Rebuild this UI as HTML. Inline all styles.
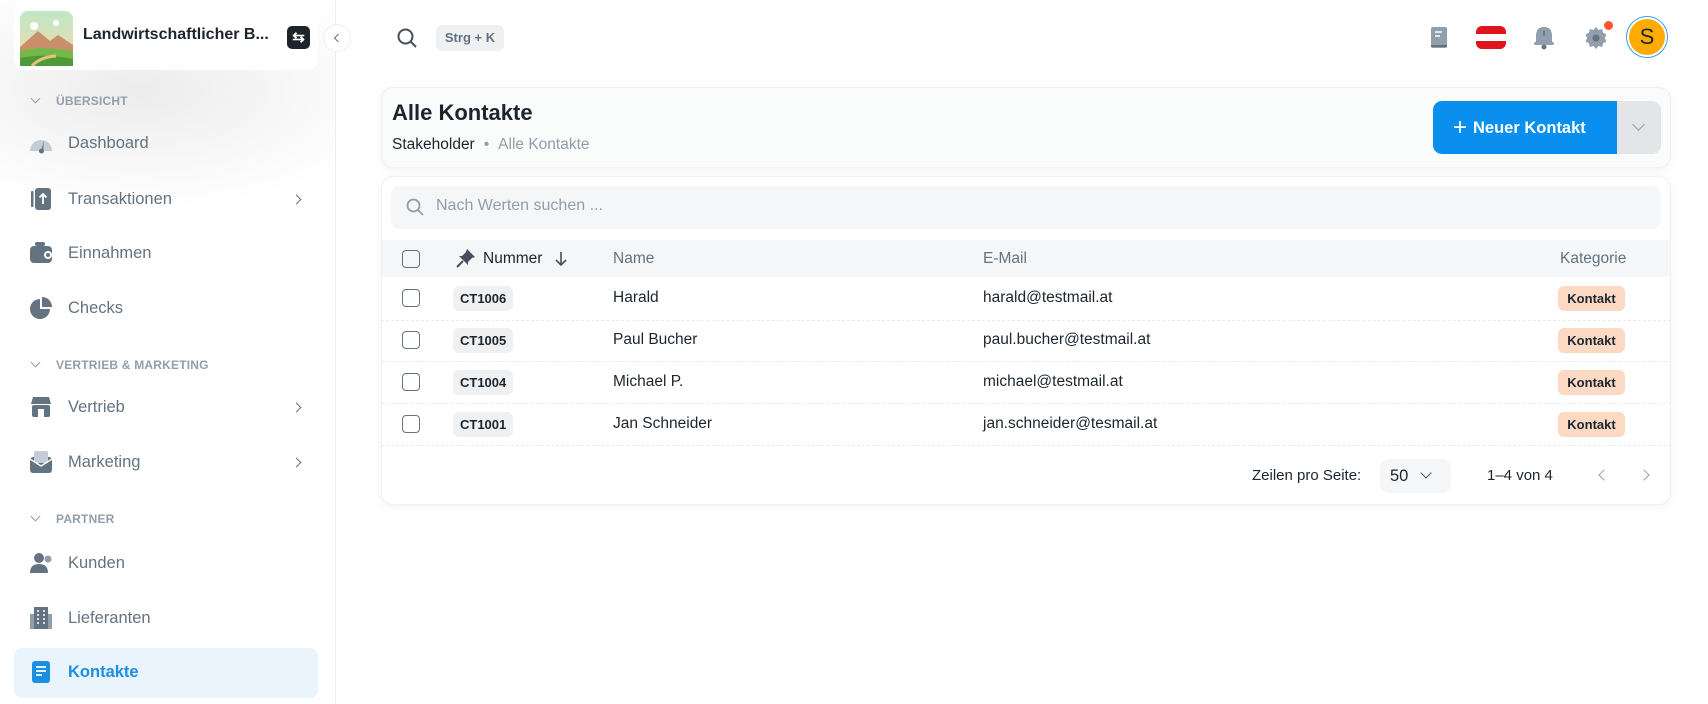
<!DOCTYPE html>
<html><head><meta charset="utf-8"><style>
*{box-sizing:border-box;margin:0;padding:0}
body{width:1708px;height:704px;overflow:hidden;background:#fff;font-family:"Liberation Sans",sans-serif;color:#1c252e;position:relative}
.a{position:absolute}
.sb{left:0;top:0;width:336px;height:704px;border-right:1px solid #eceef0;background:radial-gradient(ellipse 260px 120px at 140px 90px,#ececec,rgba(255,255,255,0) 100%)}
.brand{left:14px;top:0;width:304px;height:70px;background:#fff;border-radius:10px}
.sec{font-size:12px;font-weight:bold;color:#919eab;letter-spacing:.2px;left:56px}
.secchev{left:32px;width:7px;height:7px;border-right:1.5px solid #919eab;border-bottom:1.5px solid #919eab;transform:rotate(45deg)}
.mi{left:68px;font-size:16.5px;color:#637381}
.ic{left:28px;width:26px;height:26px}
.chev{left:293px;width:7px;height:7px;border-right:1.8px solid #637381;border-top:1.8px solid #637381;transform:rotate(45deg)}
.card{background:#fff;border:1px solid #f0f1f3;border-radius:12px;box-shadow:0 2px 8px rgba(145,158,171,.12)}
.th{font-size:15.5px;color:#637381;top:250px}
.td{font-size:15.5px;color:#1c252e}
.cb{left:402px;width:18px;height:18px;border:1.6px solid #637381;border-radius:4px}
.ct{left:453px;height:25px;padding:0 7px;background:#eef0f2;border-radius:6px;font-size:13px;font-weight:bold;line-height:25px}
.kb{left:1558px;height:25px;width:67px;background:#fbd9c3;border-radius:6px;font-size:13px;font-weight:bold;line-height:25px;text-align:center;color:#1c252e}
.rl{left:381px;width:1290px;border-top:1px dashed #e8eaed}
</style></head><body>
<div class="a sb"></div>
<div class="a brand"></div>
<svg class="a" style="left:20px;top:11px" width="53" height="55" viewBox="0 0 53 55"><defs><linearGradient id="sk" x1="0" y1="0" x2="0" y2="1"><stop offset="0" stop-color="#bfe8c8"/><stop offset="1" stop-color="#f6d8a8"/></linearGradient></defs><rect width="53" height="55" rx="8" fill="url(#sk)"/><path d="M0 36 L18 20 L30 30 L38 24 L53 34 V55 H0Z" fill="#c98f6a"/><path d="M0 40 Q20 34 53 40 V55 H0Z" fill="#74b84a"/><path d="M0 47 Q25 42 53 48 V55 H0Z" fill="#4d9a3a"/><path d="M12 55 Q20 46 36 45" stroke="#e8c27a" stroke-width="3" fill="none"/><circle cx="14" cy="15" r="4" fill="#fff"/><circle cx="36" cy="12" r="3" fill="#fff"/></svg>
<div class="a" style="left:83px;top:26px;font-size:16px;font-weight:bold;color:#1c252e">Landwirtschaftlicher B...</div>
<div class="a" style="left:287px;top:26px;width:23px;height:23px;background:#1c252e;border-radius:5px;color:#fff;font-size:15px;text-align:center;line-height:23px;font-weight:bold">⇆</div>
<div class="a" style="left:323px;top:24px;width:28px;height:28px;border:1px solid #eceef0;border-radius:50%;background:#fff"></div>
<div class="a" style="left:335px;top:35px;width:6px;height:6px;border-left:1.5px solid #637381;border-bottom:1.5px solid #637381;transform:rotate(45deg)"></div>

<div class="a secchev" style="top:95px"></div><div class="a sec" style="top:94px">ÜBERSICHT</div>
<div class="a secchev" style="top:359px"></div><div class="a sec" style="top:358px">VERTRIEB &amp; MARKETING</div>
<div class="a secchev" style="top:513px"></div><div class="a sec" style="top:512px">PARTNER</div>

<svg class="a ic" style="top:131px" viewBox="0 0 26 26"><path d="M2 20 A11 11 0 0 1 24 20 Z" fill="#c4cdd5"/><path d="M13 20 L16 10 L15 20Z" fill="#637381"/><circle cx="13.5" cy="20" r="2.5" fill="#637381"/></svg>
<div class="a mi" style="top:134px">Dashboard</div>
<svg class="a ic" style="top:186px" viewBox="0 0 26 26"><rect x="7" y="2" width="16" height="22" rx="3" fill="#637381"/><rect x="3" y="5" width="2.5" height="16" rx="1" fill="#637381"/><path d="M15 18 V8 M11.5 11.5 L15 8 L18.5 11.5" stroke="#fff" stroke-width="1.8" fill="none"/></svg>
<div class="a mi" style="top:190px">Transaktionen</div><div class="a chev" style="top:196px"></div>
<svg class="a ic" style="top:240px" viewBox="0 0 26 26"><rect x="2" y="6" width="22" height="17" rx="4" fill="#637381"/><rect x="7" y="2" width="10" height="4" rx="2" fill="#637381"/><circle cx="20" cy="15" r="4" fill="#fff"/><circle cx="20" cy="15" r="2" fill="#637381"/></svg>
<div class="a mi" style="top:244px">Einnahmen</div>
<svg class="a ic" style="top:295px" viewBox="0 0 26 26"><path d="M12 4 A10 10 0 1 0 22 14 L12 14Z" fill="#637381"/><path d="M14 2 A10 10 0 0 1 24 12 L14 12Z" fill="#637381"/></svg>
<div class="a mi" style="top:299px">Checks</div>
<svg class="a ic" style="top:394px" viewBox="0 0 26 26"><path d="M3 10 L5 3 H21 L23 10Z" fill="#637381"/><rect x="4" y="11" width="18" height="12" rx="2" fill="#637381"/><rect x="10" y="15" width="6" height="8" fill="#fff"/></svg>
<div class="a mi" style="top:398px">Vertrieb</div><div class="a chev" style="top:404px"></div>
<svg class="a ic" style="top:449px" viewBox="0 0 26 26"><rect x="2" y="8" width="22" height="16" rx="3" fill="#637381"/><rect x="6" y="2" width="14" height="12" rx="2" fill="#c4cdd5"/><path d="M2 10 L13 17 L24 10" stroke="#fff" stroke-width="1.5" fill="none"/></svg>
<div class="a mi" style="top:453px">Marketing</div><div class="a chev" style="top:459px"></div>
<svg class="a ic" style="top:550px" viewBox="0 0 26 26"><circle cx="11" cy="8" r="5" fill="#637381"/><path d="M2 23 Q2 14 11 14 Q20 14 20 23Z" fill="#637381"/><circle cx="20" cy="9" r="3.5" fill="#919eab"/></svg>
<div class="a mi" style="top:554px">Kunden</div>
<svg class="a ic" style="top:605px" viewBox="0 0 26 26"><rect x="6" y="2" width="14" height="22" fill="#637381"/><rect x="2" y="9" width="4" height="15" fill="#919eab"/><rect x="20" y="9" width="4" height="15" fill="#919eab"/><path d="M9 6h2M15 6h2M9 10h2M15 10h2M9 14h2M15 14h2M9 18h2M15 18h2" stroke="#fff" stroke-width="1.5"/></svg>
<div class="a mi" style="top:609px">Lieferanten</div>
<div class="a" style="left:14px;top:648px;width:304px;height:50px;background:#e9f4fd;border-radius:8px"></div>
<svg class="a ic" style="top:659px" viewBox="0 0 26 26"><rect x="4" y="2" width="18" height="22" rx="3" fill="#1a8fe3"/><path d="M8 8h10M8 12h10M8 16h6" stroke="#fff" stroke-width="1.8"/></svg>
<div class="a mi" style="top:663px;color:#1a8fe3;font-weight:bold">Kontakte</div>

<svg class="a" style="left:396px;top:27px" width="22" height="22" viewBox="0 0 22 22"><circle cx="9.5" cy="9.5" r="7" stroke="#454f5b" stroke-width="2" fill="none"/><path d="M15 15 L20 20" stroke="#454f5b" stroke-width="2"/></svg>
<div class="a" style="left:436px;top:25px;width:68px;height:26px;background:#eef0f2;border-radius:6px;font-size:13px;font-weight:bold;color:#637381;text-align:center;line-height:26px">Strg + K</div>

<svg class="a" style="left:1429px;top:26px" width="20" height="24" viewBox="0 0 20 24"><rect x="2" y="1" width="16" height="21" rx="2" fill="#919eab"/><path d="M2 20 H18" stroke="#637381" stroke-width="2"/><path d="M6 6h7M6 10h5" stroke="#fff" stroke-width="1.6"/></svg>
<div class="a" style="left:1476px;top:26px;width:30px;height:23px;border-radius:6px;overflow:hidden;background:linear-gradient(#e1141e 0 34%,#fff 34% 66%,#e1141e 66%)"></div>
<svg class="a" style="left:1533px;top:25px" width="22" height="26" viewBox="0 0 22 26"><path d="M11 2 Q3 2 3 11 V18 H19 V11 Q19 2 11 2Z" fill="#919eab"/><rect x="1" y="17" width="20" height="3" rx="1.5" fill="#919eab"/><circle cx="11" cy="22" r="2.5" fill="#637381"/><path d="M11 6v5" stroke="#637381" stroke-width="1.6"/></svg>
<svg class="a" style="left:1592px;top:26px" width="24" height="24" viewBox="0 0 24 24" transform="translate(-8 0)"><path d="M12 1l2.5 3 3.7-1 .8 3.8 3.5 1.6-1.7 3.6 1.7 3.6-3.5 1.6-.8 3.8-3.7-1L12 23l-2.5-3-3.7 1-.8-3.8-3.5-1.6L3.2 12 1.5 8.4 5 6.8 5.8 3l3.7 1z" fill="#919eab"/><circle cx="12" cy="12" r="3.5" fill="#637381"/></svg>
<div class="a" style="left:1604px;top:21px;width:9px;height:9px;border-radius:50%;background:#ff5630"></div>
<div class="a" style="left:1626px;top:16px;width:42px;height:42px;border-radius:50%;border:1px solid #3aa0e6;padding:2px"><div style="width:100%;height:100%;border-radius:50%;background:#ffab00;color:#1c252e;font-size:22px;text-align:center;line-height:36px">S</div></div>

<div class="a card" style="left:381px;top:87px;width:1290px;height:81px;background:#fafbfb"></div>
<div class="a" style="left:392px;top:100px;font-size:22px;font-weight:bold">Alle Kontakte</div>
<div class="a" style="left:392px;top:136px;font-size:15.5px"><span>Stakeholder</span><span style="color:#919eab;margin:0 9px">•</span><span style="color:#919eab">Alle Kontakte</span></div>
<div class="a" style="left:1433px;top:101px;width:184px;height:53px;background:#0b8fee;border-radius:9px 0 0 9px;color:#fff;font-size:16.5px;font-weight:bold;line-height:53px;padding-left:20px"><span style="font-size:24px;font-weight:normal;vertical-align:-2px;margin-right:6px">+</span>Neuer Kontakt</div>
<div class="a" style="left:1617px;top:101px;width:44px;height:53px;background:#e3e5e8;border-radius:0 9px 9px 0"></div>
<div class="a" style="left:1634px;top:120px;width:9px;height:9px;border-right:1.5px solid #919eab;border-bottom:1.5px solid #919eab;transform:rotate(45deg)"></div>

<div class="a card" style="left:381px;top:176px;width:1290px;height:329px"></div>
<div class="a" style="left:391px;top:186px;width:1270px;height:43px;background:#f4f6f8;border-radius:9px"></div>
<svg class="a" style="left:405px;top:197px" width="20" height="20" viewBox="0 0 20 20"><circle cx="8.5" cy="8.5" r="6" stroke="#919eab" stroke-width="1.8" fill="none"/><path d="M13 13 L18 18" stroke="#919eab" stroke-width="1.8"/></svg>
<div class="a" style="left:436px;top:197px;font-size:16px;color:#919eab">Nach Werten suchen ...</div>
<div class="a" style="left:382px;top:240px;width:1288px;height:37px;background:#f4f6f8"></div>
<div class="a cb" style="top:250px"></div>
<svg class="a" style="left:456px;top:248px" width="20" height="20" viewBox="0 0 20 20"><path d="M11 1 L19 9 L16 10 L12 14 L12 17 L3 8 L6 8 L10 4Z" fill="#454f5b"/><path d="M7 13 L1 19" stroke="#454f5b" stroke-width="2"/></svg>
<div class="a th" style="left:483px;color:#1c252e">Nummer</div>
<svg class="a" style="left:554px;top:250px" width="14" height="18" viewBox="0 0 14 18"><path d="M7 2 V15 M2 10 L7 15 L12 10" stroke="#454f5b" stroke-width="1.6" fill="none"/></svg>
<div class="a th" style="left:613px">Name</div>
<div class="a th" style="left:983px">E-Mail</div>
<div class="a th" style="left:1560px">Kategorie</div>

<div class="a cb" style="top:289px"></div><div class="a ct" style="top:286px">CT1006</div><div class="a td" style="left:613px;top:289px">Harald</div><div class="a td" style="left:983px;top:289px">harald@testmail.at</div><div class="a kb" style="top:286px">Kontakt</div>
<div class="a rl" style="top:320px"></div>
<div class="a cb" style="top:331px"></div><div class="a ct" style="top:328px">CT1005</div><div class="a td" style="left:613px;top:331px">Paul Bucher</div><div class="a td" style="left:983px;top:331px">paul.bucher@testmail.at</div><div class="a kb" style="top:328px">Kontakt</div>
<div class="a rl" style="top:361px"></div>
<div class="a cb" style="top:373px"></div><div class="a ct" style="top:370px">CT1004</div><div class="a td" style="left:613px;top:373px">Michael P.</div><div class="a td" style="left:983px;top:373px">michael@testmail.at</div><div class="a kb" style="top:370px">Kontakt</div>
<div class="a rl" style="top:403px"></div>
<div class="a cb" style="top:415px"></div><div class="a ct" style="top:412px">CT1001</div><div class="a td" style="left:613px;top:415px">Jan Schneider</div><div class="a td" style="left:983px;top:415px">jan.schneider@tesmail.at</div><div class="a kb" style="top:412px">Kontakt</div>
<div class="a rl" style="top:445px"></div>

<div class="a td" style="left:1252px;top:467px;font-size:15px">Zeilen pro Seite:</div>
<div class="a" style="left:1380px;top:459px;width:71px;height:34px;background:#f4f6f8;border-radius:9px;font-size:16.5px;line-height:34px;padding-left:10px">50</div>
<div class="a" style="left:1422px;top:469px;width:8px;height:8px;border-right:1.6px solid #454f5b;border-bottom:1.6px solid #454f5b;transform:rotate(45deg)"></div>
<div class="a td" style="left:1487px;top:467px;font-size:15px">1–4 von 4</div>
<div class="a" style="left:1600px;top:471px;width:8px;height:8px;border-left:1.6px solid #919eab;border-bottom:1.6px solid #919eab;transform:rotate(45deg)"></div>
<div class="a" style="left:1640px;top:471px;width:8px;height:8px;border-right:1.6px solid #919eab;border-top:1.6px solid #919eab;transform:rotate(45deg)"></div>
</body></html>
